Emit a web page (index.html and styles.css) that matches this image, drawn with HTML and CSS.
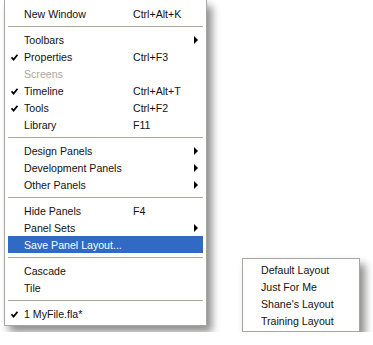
FILE: index.html
```html
<!DOCTYPE html>
<html lang="en">
<head>
    <meta charset="UTF-8">
    <title>Window menu</title>
    <link rel="stylesheet" href="styles.css">
</head>
<body>
    <div class="stage">
        <div class="menu main-menu">
            <div class="item"><span class="check"></span><span class="label">New Window</span><span class="key">Ctrl+Alt+K</span><span class="arrow"></span></div>
            <div class="sep"></div>
            <div class="item"><span class="check"></span><span class="label">Toolbars</span><span class="key"></span><span class="arrow"><i class="tri"></i></span></div>
            <div class="item"><span class="check"><svg width="7" height="7" viewBox="0 0 7 7"><path d="M0.5 3.2 L2.6 5.6 L6.5 0.8" fill="none" stroke="#000" stroke-width="1.7"/></svg></span><span class="label">Properties</span><span class="key">Ctrl+F3</span><span class="arrow"></span></div>
            <div class="item disabled"><span class="check"></span><span class="label">Screens</span><span class="key"></span><span class="arrow"></span></div>
            <div class="item"><span class="check"><svg width="7" height="7" viewBox="0 0 7 7"><path d="M0.5 3.2 L2.6 5.6 L6.5 0.8" fill="none" stroke="#000" stroke-width="1.7"/></svg></span><span class="label">Timeline</span><span class="key">Ctrl+Alt+T</span><span class="arrow"></span></div>
            <div class="item"><span class="check"><svg width="7" height="7" viewBox="0 0 7 7"><path d="M0.5 3.2 L2.6 5.6 L6.5 0.8" fill="none" stroke="#000" stroke-width="1.7"/></svg></span><span class="label">Tools</span><span class="key">Ctrl+F2</span><span class="arrow"></span></div>
            <div class="item"><span class="check"></span><span class="label">Library</span><span class="key">F11</span><span class="arrow"></span></div>
            <div class="sep"></div>
            <div class="item"><span class="check"></span><span class="label">Design Panels</span><span class="key"></span><span class="arrow"><i class="tri"></i></span></div>
            <div class="item"><span class="check"></span><span class="label">Development Panels</span><span class="key"></span><span class="arrow"><i class="tri"></i></span></div>
            <div class="item"><span class="check"></span><span class="label">Other Panels</span><span class="key"></span><span class="arrow"><i class="tri"></i></span></div>
            <div class="sep"></div>
            <div class="item"><span class="check"></span><span class="label">Hide Panels</span><span class="key">F4</span><span class="arrow"></span></div>
            <div class="item"><span class="check"></span><span class="label">Panel Sets</span><span class="key"></span><span class="arrow"><i class="tri"></i></span></div>
            <div class="item active"><span class="check"></span><span class="label">Save Panel Layout...</span><span class="key"></span><span class="arrow"></span></div>
            <div class="sep"></div>
            <div class="item"><span class="check"></span><span class="label">Cascade</span><span class="key"></span><span class="arrow"></span></div>
            <div class="item"><span class="check"></span><span class="label">Tile</span><span class="key"></span><span class="arrow"></span></div>
            <div class="sep"></div>
            <div class="item"><span class="check"><svg width="7" height="7" viewBox="0 0 7 7"><path d="M0.5 3.2 L2.6 5.6 L6.5 0.8" fill="none" stroke="#000" stroke-width="1.7"/></svg></span><span class="label">1 MyFile.fla*</span><span class="key"></span><span class="arrow"></span></div>
        </div>

        <div class="menu sub-menu">
            <div class="sub-item">Default Layout</div>
            <div class="sub-item">Just For Me</div>
            <div class="sub-item">Shane's Layout</div>
            <div class="sub-item">Training Layout</div>
        </div>
    </div>
</body>
</html>
```

FILE: styles.css
```css
body {
    margin: 0;
    background: #fff;
    font-family: 'Liberation Sans', Arial, sans-serif;
    font-size: 10.6px;
    color: #111;
}

.stage {
    display: flex;
    align-items: flex-start;
    padding-left: 4px;
}

.menu {
    background: #fff;
    border: 1px solid #a7a69e;
    box-shadow: 5px 6px 8px rgba(0, 0, 0, 0.45);
}

.main-menu {
    width: 195px;
    border-top: none;
    padding: 5px 3px 3px 3px;
}

.item {
    display: grid;
    grid-template-columns: 13px 109px 1fr 9px;
    align-items: center;
    height: 17px;
    padding-left: 3px;
}

.item .label,
.item .key {
    white-space: nowrap;
}

.check {
    display: flex;
    align-items: center;
}

.check svg {
    display: block;
    margin-top: 1px;
}

.disabled {
    color: #aca899;
}

.active {
    background: #316ac5;
    color: #fff;
}

.tri {
    display: block;
    width: 0;
    height: 0;
    border-top: 4px solid transparent;
    border-bottom: 4px solid transparent;
    border-left: 4px solid #000;
}

.sep {
    height: 1px;
    background: #aca899;
    margin: 4px 0;
}

.sub-menu {
    width: 97px;
    margin-top: 258px;
    margin-left: 35px;
    padding: 3px 1px 1px 18px;
}

.sub-item {
    height: 17px;
    line-height: 17px;
    white-space: nowrap;
}
```
